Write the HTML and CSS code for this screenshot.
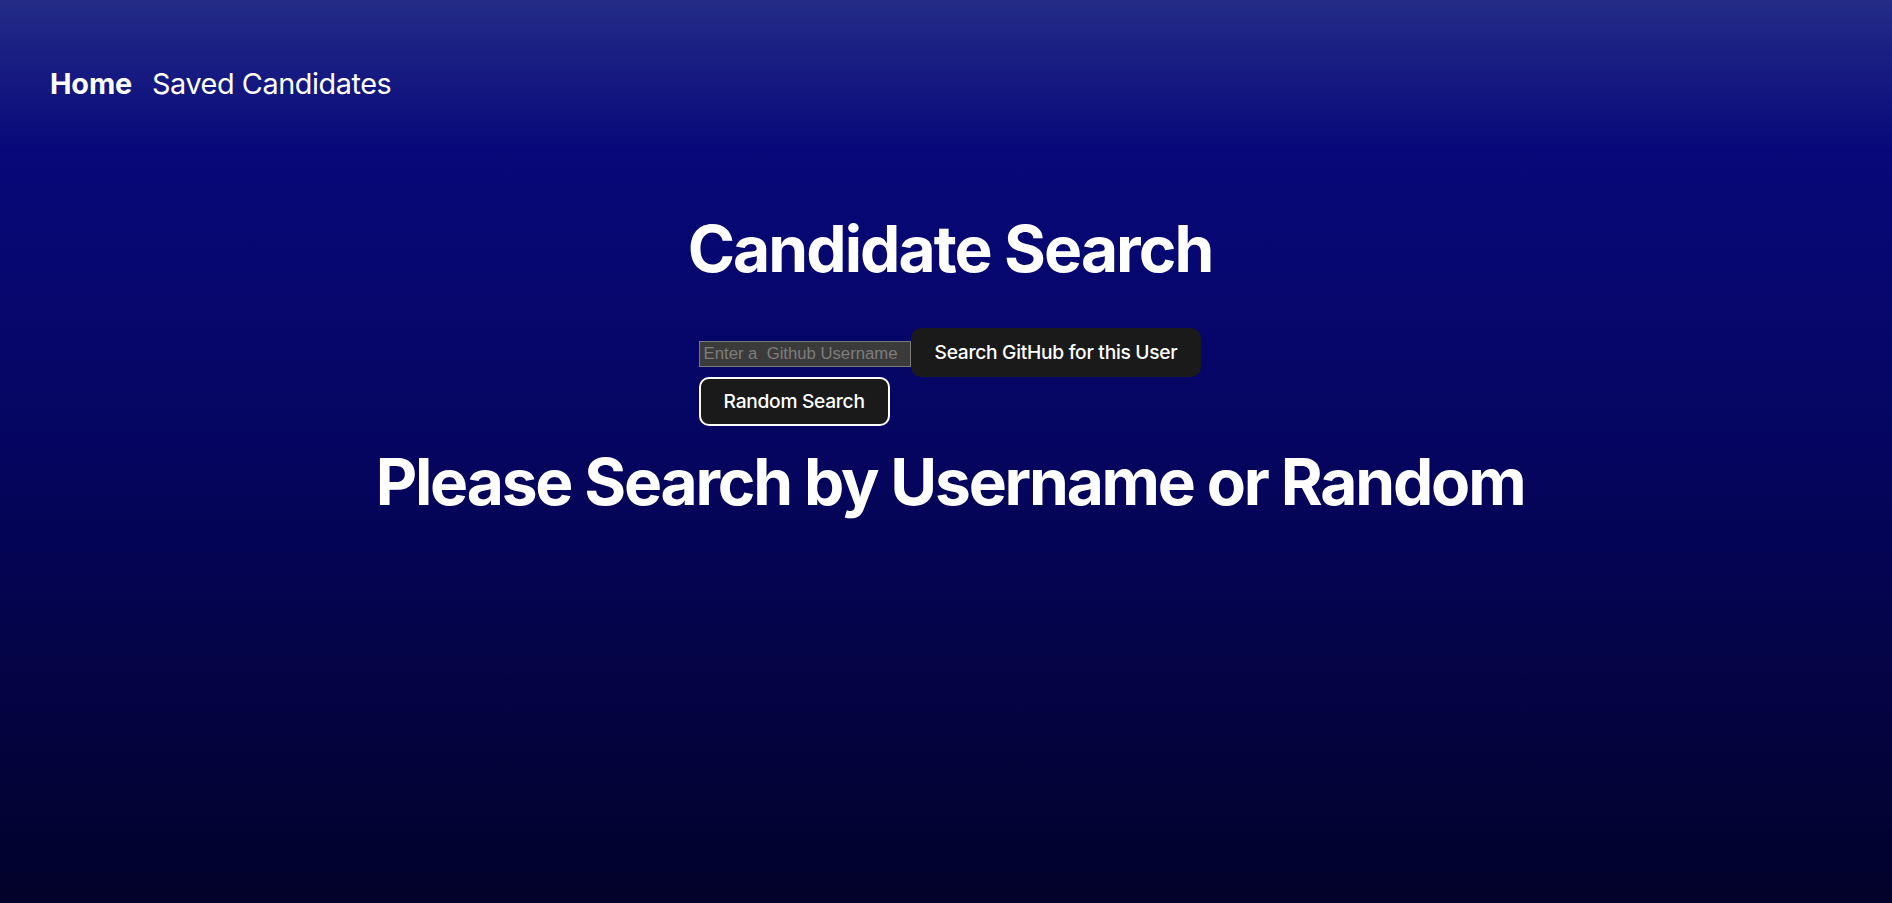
FILE: index.html
```html
<!DOCTYPE html>
<html lang="en">
<head>
<meta charset="utf-8">
<title>Candidate Search</title>
<link rel="stylesheet" href="styles.css">
</head>
<body>
<nav class="nav">
  <a class="nav-link nav-link-active" href="#">Home</a>
  <a class="nav-link" href="#">Saved Candidates</a>
</nav>
<main class="main">
  <h1 class="title">Candidate Search</h1>
  <form class="search">
    <div class="search-row">
      <input class="search-input" type="text" placeholder="Enter a  Github Username">
      <button class="btn" type="button">Search GitHub for this User</button>
    </div>
    <div class="search-row">
      <button class="btn btn-focus" type="button">Random Search</button>
    </div>
  </form>
  <h1 class="message">Please Search by Username or Random</h1>
</main>
</body>
</html>
```
FILE: styles.css
```css
html, body {
  margin: 0;
  padding: 0;
}
body {
  min-height: 100vh;
  font-family: Inter, "Noto Sans", sans-serif;
  color: #fff;
  background: linear-gradient(180deg, #232c87 0px, #08087a 150px, #050560 450px, #02022a 903px);
}
.nav {
  display: flex;
  gap: 20px;
  padding: 62px 0 0 50px;
}
.nav-link {
  font-size: 28.8px;
  line-height: 1.5;
  color: #fff;
  text-decoration: none;
  font-weight: 400;
  letter-spacing: -0.015em;
}
.nav-link-active {
  font-weight: 700;
  letter-spacing: -0.005em;
}
.main {
  display: flex;
  flex-direction: column;
  align-items: center;
  padding-left: 8px;
}
.title {
  margin: 109px 0 0;
  font-size: 64px;
  line-height: 1.1;
  font-weight: 700;
  letter-spacing: -0.03em;
}
.search {
  margin-top: 43px;
  display: flex;
  flex-direction: column;
}
.search-row {
  display: flex;
  align-items: baseline;
}
.search-input {
  box-sizing: border-box;
  width: 212px;
  height: 26px;
  padding: 1px 4px;
  border: 1px solid #7a7a7a;
  background: #3b3b3b;
  color: #fff;
  font-family: "Liberation Sans", Arial, sans-serif;
  font-size: 16.7px;
}
.search-input::placeholder {
  color: #7d7d7d;
}
.btn {
  font-family: Inter, "Noto Sans", sans-serif;
  font-size: 19.2px;
  font-weight: 500;
  line-height: 24px;
  letter-spacing: -0.015em;
  padding: 11.5px 23px;
  border: 1px solid transparent;
  border-radius: 10px;
  background: #1a1a1a;
  color: #fff;
  cursor: pointer;
}
.btn-focus {
  border: 2px solid #fff;
  padding: 10.5px 23px;
}
.message {
  margin: 21.5px 0 0;
  font-size: 64px;
  line-height: 1.1;
  font-weight: 700;
  letter-spacing: -0.034em;
}
```
